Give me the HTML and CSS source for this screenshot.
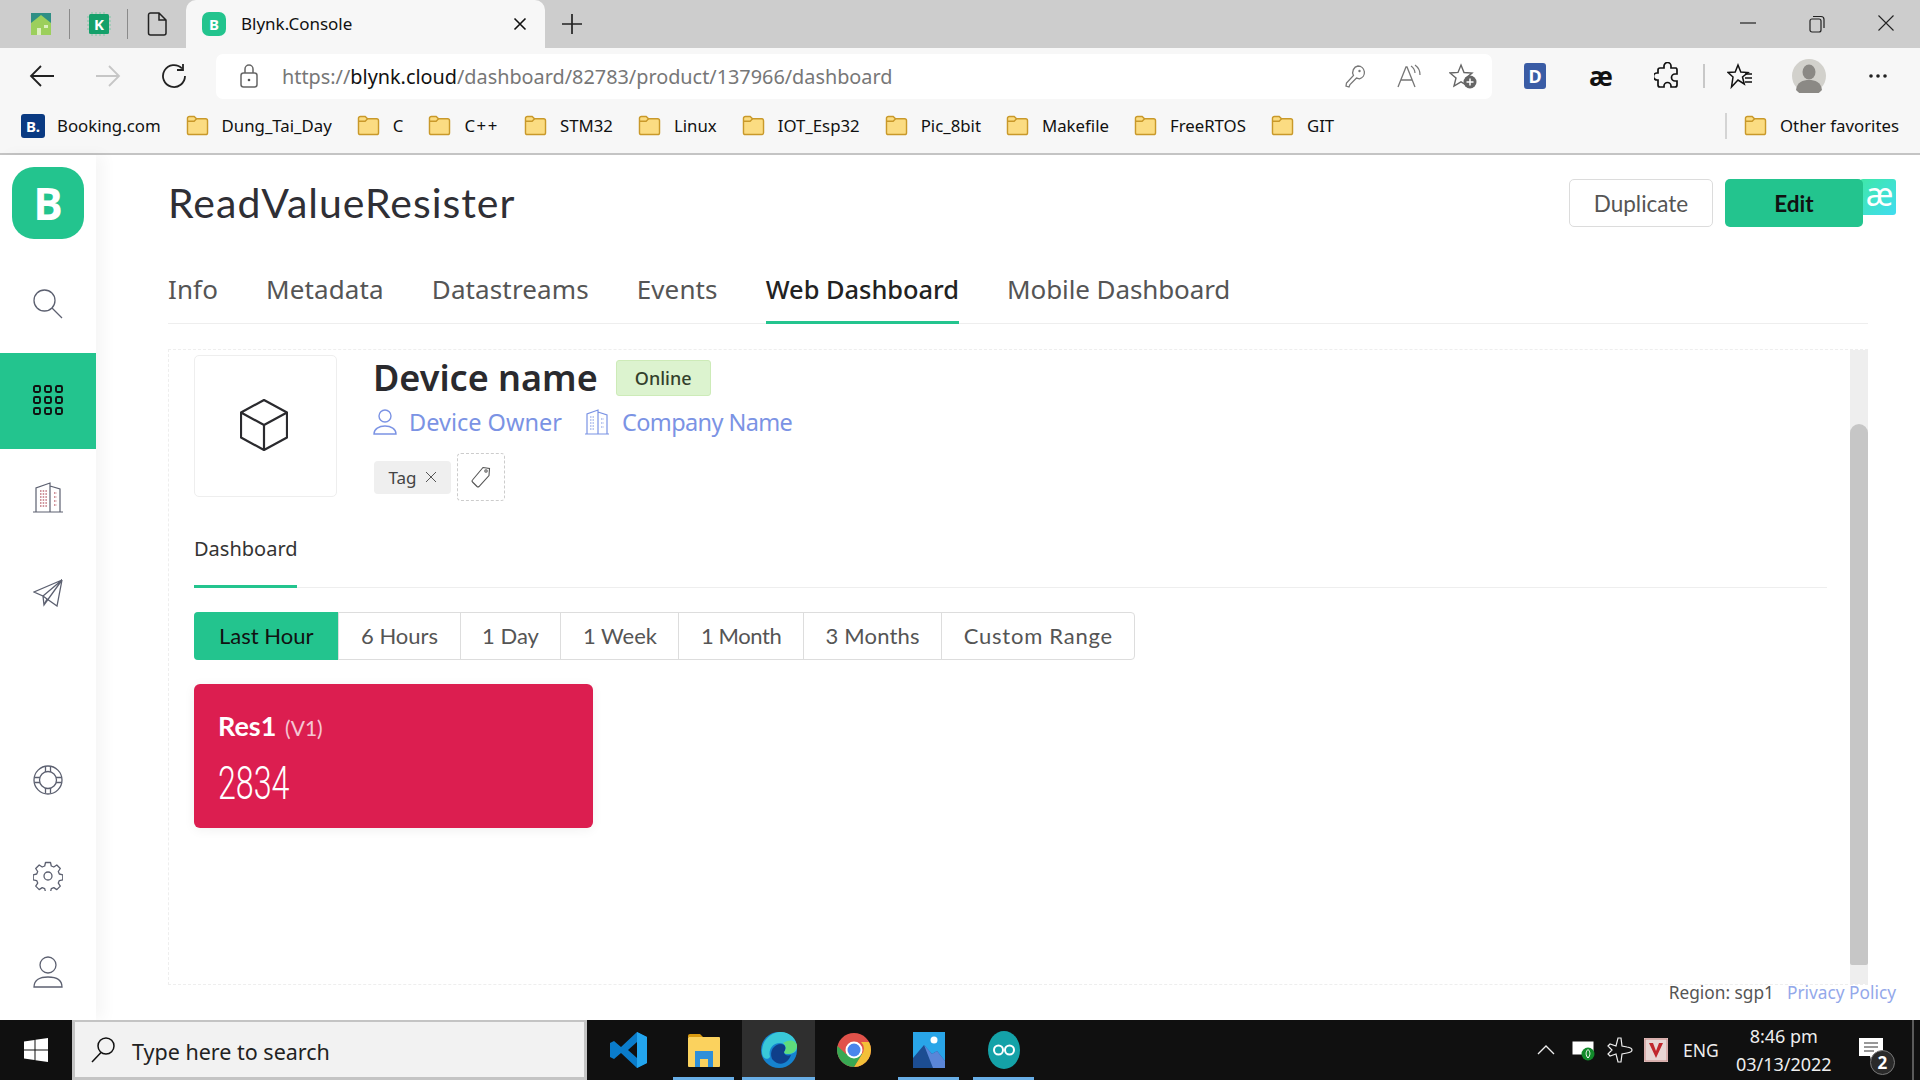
FILE: index.html
```html
<!DOCTYPE html>
<html lang="en">
<head>
  <meta charset="UTF-8">
  <meta name="viewport" content="width=device-width, initial-scale=1.0">
  <title>Blynk.Console</title>
  <link rel="stylesheet" href="styles.css">
</head>
<body>
  <svg class="defs" width="0" height="0">
    <symbol id="folder" viewBox="0 0 24 22">
      <path d="M1.5 5V3.5A2 2 0 0 1 3.5 1.500H8.500L11 4H20.500A2 2 0 0 1 22.500 6V18.500A2 2 0 0 1 20.500 20.500H3.500A2 2 0 0 1 1.500 18.500Z" fill="#fbdc82" stroke="#c9992a" stroke-width="1.500"/>
      <path d="M1.500 6.500H8.500L11 4" fill="none" stroke="#c9992a" stroke-width="1.500"/>
    </symbol>
  </svg>

  <!-- tab strip -->
  <div class="tabstrip">
    <div class="pinned">
      <svg width="24" height="24" viewBox="0 0 24 24"><path d="M2 1h20v10H2z" fill="#2f8f85"/><path d="M2 11l10-8 10 8v12H2z" fill="#9ccf5c"/><path d="M8 23v-7h4v7zM15 13h4v3h-4z" fill="#dcefc0"/></svg>
    </div>
    <div class="tab-sep"></div>
    <div class="pinned">
      <svg width="26" height="26" viewBox="0 0 26 26"><path d="M1 6h24M1 10h24M1 14h24M1 18h24M6 1v24M10 1v24M14 1v24M18 1v24" stroke="#7fc9a5" stroke-width="1"/><rect x="3" y="3" width="20" height="20" rx="1.500" fill="#14a06a"/><text x="13" y="18.500" class="k-glyph" text-anchor="middle">K</text></svg>
    </div>
    <div class="tab-sep"></div>
    <div class="pinned">
      <svg width="20" height="24" viewBox="0 0 20 24"><path d="M3.500 1h8.500l7 7v13a2 2 0 0 1-2 2H3.500a2 2 0 0 1-2-2V3a2 2 0 0 1 2-2zM12 1v7h7" fill="none" stroke="#222" stroke-width="1.500"/></svg>
    </div>
    <div class="tab-active">
      <div class="favicon">B</div>
      <span class="tab-title">Blynk.Console</span>
      <svg class="tab-close" width="14" height="14" viewBox="0 0 14 14"><path d="M1.500 1.500l11 11M12.500 1.500l-11 11" stroke="#111" stroke-width="1.600"/></svg>
    </div>
    <svg class="tab-new" width="22" height="22" viewBox="0 0 22 22"><path d="M11 1v20M1 11h20" stroke="#222" stroke-width="1.700"/></svg>
    <div class="win-controls">
      <div class="win-btn"><svg width="16" height="16" viewBox="0 0 16 16"><path d="M0 8h16" stroke="#222" stroke-width="1.200"/></svg></div>
      <div class="win-btn"><svg width="16" height="18" viewBox="0 0 16 18"><rect x="1" y="4" width="11" height="13" rx="2" fill="none" stroke="#222" stroke-width="1.200"/><path d="M4 1.500h8a3 3 0 0 1 3 3V13" fill="none" stroke="#222" stroke-width="1.200"/></svg></div>
      <div class="win-btn"><svg width="16" height="16" viewBox="0 0 16 16"><path d="M.5.500l15 15M15.500.500l-15 15" stroke="#222" stroke-width="1.100"/></svg></div>
    </div>
  </div>

  <!-- address bar -->
  <div class="toolbar">
    <div class="tool-btn"><svg width="26" height="24" viewBox="0 0 26 24"><path d="M25 12H2M12 2L2 12l10 10" fill="none" stroke="#222" stroke-width="1.800"/></svg></div>
    <div class="tool-btn"><svg width="26" height="24" viewBox="0 0 26 24"><path d="M1 12h23M14 2l10 10-10 10" fill="none" stroke="#c6c6c6" stroke-width="1.800"/></svg></div>
    <div class="tool-btn"><svg width="26" height="26" viewBox="0 0 26 26"><path d="M21 5.500A11 11 0 1 0 24 13M22 1v6h-6" fill="none" stroke="#222" stroke-width="1.800"/></svg></div>
    <div class="address">
      <svg class="lock" width="18" height="24" viewBox="0 0 18 24"><rect x="1" y="9" width="16" height="14" rx="2.500" fill="none" stroke="#666" stroke-width="1.500"/><path d="M5 9V5a4 4 0 0 1 8 0v4" fill="none" stroke="#666" stroke-width="1.500"/><circle cx="9" cy="16" r="1.300" fill="#555"/></svg>
      <div class="url">https://<b>blynk.cloud</b>/dashboard/82783/product/137966/dashboard</div>
      <div class="addr-btn"><svg width="22" height="24" viewBox="0 0 22 24"><path d="M14 2a6.500 6.500 0 0 1 1.500 12.800L12.500 14 6 20.500l-1 2.500-3-1 .500-3 7-7.500A6.500 6.500 0 0 1 14 2z" fill="none" stroke="#777" stroke-width="1.300"/><circle cx="15.500" cy="7" r="1.200" fill="#777"/></svg></div>
      <div class="addr-btn"><svg width="26" height="24" viewBox="0 0 26 24"><path d="M2 23L10 3h1l8 20M5 16h11" fill="none" stroke="#777" stroke-width="1.300"/><path d="M15 2a9 9 0 0 1 4 7M19 1a12 12 0 0 1 5 10" fill="none" stroke="#777" stroke-width="1.200"/></svg></div>
      <div class="addr-btn"><svg width="28" height="26" viewBox="0 0 28 26"><path d="M12 2l3 7.500 8 .600-6 5 2 8-7-4.300L5 23l2-8-6-5 8-.600z" fill="none" stroke="#666" stroke-width="1.400"/><circle cx="21" cy="19" r="6.500" fill="#666"/><path d="M21 15.500v7M17.500 19h7" stroke="#fff" stroke-width="1.500"/></svg></div>
    </div>
    <div class="tool-btn"><div class="ext-d">D</div></div>
    <div class="tool-btn"><span class="ext-ae">æ</span></div>
    <div class="tool-btn"><svg width="26" height="28" viewBox="0 0 26 28"><path d="M10 4a3.500 3.500 0 0 1 7 0v2h5a2 2 0 0 1 1 2v4h-2a3.500 3.500 0 0 0 0 7h2v4a2 2 0 0 1-2 2h-4v-1a3.500 3.500 0 0 0-7 0v1H6a2 2 0 0 1-2-2v-5H3a3.500 3.500 0 0 1 0-7h1V8a2 2 0 0 1 2-2h4z" fill="none" stroke="#111" stroke-width="1.700"/></svg></div>
    <div class="tool-sep"></div>
    <div class="tool-btn"><svg width="26" height="26" viewBox="0 0 26 26"><path d="M11 2l2.800 7 7.200.500-5.500 4.500 1.800 7-6.300-4-6.500 7 1.500-10L1 9.500 8.200 9z" fill="none" stroke="#111" stroke-width="1.500"/><path d="M18 11h7M18 15h7M18 19h7" stroke="#111" stroke-width="1.400"/></svg></div>
    <div class="tool-btn profile"><svg width="34" height="34" viewBox="0 0 34 34"><circle cx="17" cy="17" r="17" fill="#d2d1cc"/><ellipse cx="17" cy="13" rx="6.500" ry="7.500" fill="#8b8985"/><path d="M4 31c1-8 7-10 13-10s12 2 13 10a17 17 0 0 1-26 0z" fill="#8b8985"/></svg></div>
    <div class="tool-btn profile"><svg width="20" height="6" viewBox="0 0 20 6"><circle cx="3" cy="3" r="1.800" fill="#222"/><circle cx="10" cy="3" r="1.800" fill="#222"/><circle cx="17" cy="3" r="1.800" fill="#222"/></svg></div>
  </div>

  <!-- favorites bar -->
  <div class="bookmarks">
    <div class="bm booking-bm"><div class="booking-icon">B.</div><span>Booking.com</span></div>
    <div class="bm"><svg class="folder"><use href="#folder"/></svg><span>Dung_Tai_Day</span></div>
    <div class="bm"><svg class="folder"><use href="#folder"/></svg><span>C</span></div>
    <div class="bm cpp-bm"><svg class="folder"><use href="#folder"/></svg><span>C++</span></div>
    <div class="bm"><svg class="folder"><use href="#folder"/></svg><span>STM32</span></div>
    <div class="bm"><svg class="folder"><use href="#folder"/></svg><span>Linux</span></div>
    <div class="bm"><svg class="folder"><use href="#folder"/></svg><span>IOT_Esp32</span></div>
    <div class="bm"><svg class="folder"><use href="#folder"/></svg><span>Pic_8bit</span></div>
    <div class="bm"><svg class="folder"><use href="#folder"/></svg><span>Makefile</span></div>
    <div class="bm"><svg class="folder"><use href="#folder"/></svg><span>FreeRTOS</span></div>
    <div class="bm"><svg class="folder"><use href="#folder"/></svg><span>GIT</span></div>
    <div class="bm other-bm"><svg class="folder"><use href="#folder"/></svg><span>Other favorites</span></div>
  </div>

  <div class="app">
    <!-- left menu -->
    <div class="sidebar">
      <div class="logo">B</div>
      <div class="side-item search-item"><svg width="30" height="30" viewBox="0 0 30 30"><circle cx="11.500" cy="11.500" r="10.500" fill="none" stroke="#5c6070" stroke-width="1.300"/><path d="M19 19l10 10" stroke="#5c6070" stroke-width="1.300"/></svg></div>
      <div class="side-item active">
        <svg width="30" height="30" viewBox="0 0 30 30" fill="none" stroke="#111" stroke-width="1.900"><rect x="1" y="1" width="6" height="6" rx="1.500"/><rect x="12" y="1" width="6" height="6" rx="1.500"/><rect x="23" y="1" width="6" height="6" rx="1.500"/><rect x="1" y="12" width="6" height="6" rx="1.500"/><rect x="12" y="12" width="6" height="6" rx="1.500"/><rect x="23" y="12" width="6" height="6" rx="1.500"/><rect x="1" y="23" width="6" height="6" rx="1.500"/><rect x="12" y="23" width="6" height="6" rx="1.500"/><rect x="23" y="23" width="6" height="6" rx="1.500"/></svg>
      </div>
      <div class="side-item"><svg width="30" height="32" viewBox="0 0 30 32" fill="none" stroke="#5c6070" stroke-width="1.200"><path d="M0 31h30M3 31V7l14-5v29M17 5l10 3v23"/><path d="M7 10h7M7 13h7M7 16h7M7 19h7M7 22h7M7 25h7M21 12h3M21 16h3M21 20h3M21 24h3" stroke="#c0707a" stroke-dasharray="1.500 1.200" stroke-width="1.300"/></svg></div>
      <div class="side-item"><svg width="30" height="28" viewBox="0 0 30 28" fill="none" stroke="#5c6070" stroke-width="1.300"><path d="M29 1L1 13l9 4zM29 1L10 17l1 9zM29 1l-5 26-10-7-3 6M10 17l4 3"/></svg></div>
      <div class="side-item bottom-first"><svg width="30" height="30" viewBox="0 0 30 30" fill="none" stroke="#5c6070" stroke-width="1.300"><circle cx="15" cy="15" r="14"/><circle cx="15" cy="15" r="8.500"/><path d="M12.500 1.500v5.500M17.500 1.500v5.500M12.500 23v5.500M17.500 23v5.500M1.500 12.500H7M1.500 17.500H7M23 12.500h5.500M23 17.500h5.500"/></svg></div>
      <div class="side-item"><svg width="30" height="30" viewBox="0 0 30 30" fill="none" stroke="#5c6070" stroke-width="1.300"><circle cx="15" cy="15" r="4"/><path d="M12.500 1.500h5l.800 3.500 2.500 1 3-2 3.500 3.500-2 3 1 2.500 3.500.800v5l-3.500.800-1 2.500 2 3-3.500 3.500-3-2-2.500 1-.800 3.500h-5l-.800-3.500-2.500-1-3 2-3.500-3.500 2-3-1-2.500-3.500-.800v-5l3.500-.800 1-2.500-2-3 3.500-3.500 3 2 2.500-1z" stroke-linejoin="round"/></svg></div>
      <div class="side-item"><svg width="30" height="32" viewBox="0 0 30 32" fill="none" stroke="#5c6070" stroke-width="1.300"><circle cx="15" cy="9" r="8"/><path d="M1 31c0-7 6-10 14-10s14 3 14 10z"/></svg></div>
    </div>

    <div class="content">
      <div class="page-head">
        <h1 class="page-title">ReadValueResister</h1>
        <div class="head-actions">
          <button class="btn-outline">Duplicate</button>
          <button class="btn-green">Edit</button>
        </div>
        <div class="ae-overlay">æ</div>
      </div>

      <div class="page-tabs">
        <div class="page-tab">Info</div>
        <div class="page-tab">Metadata</div>
        <div class="page-tab">Datastreams</div>
        <div class="page-tab">Events</div>
        <div class="page-tab current">Web Dashboard</div>
        <div class="page-tab mobile-tab">Mobile Dashboard</div>
      </div>

      <div class="panel">
        <div class="panel-body">
          <div class="device-head">
            <div class="device-img">
              <svg width="48" height="52" viewBox="0 0 48 52" fill="none" stroke="#2a2a2e" stroke-width="2.200" stroke-linejoin="round"><path d="M24 1L47 13.500V38.500L24 51 1 38.500V13.500zM1 13.500L24 26 47 13.500M24 26V51"/></svg>
            </div>
            <div class="device-info">
              <div class="name-row">
                <div class="device-name">Device name</div>
                <div class="status">Online</div>
              </div>
              <div class="owner-row">
                <svg class="owner-icon" width="24" height="26" viewBox="0 0 24 26" fill="none" stroke="#7b93e4" stroke-width="1.400"><circle cx="12" cy="7" r="6"/><path d="M1 25c0-5 5-8 11-8s11 3 11 8z"/></svg>
                <span class="owner-link">Device Owner</span>
                <svg class="company-icon" width="24" height="26" viewBox="0 0 24 26" fill="none" stroke="#7b93e4" stroke-width="1.200"><path d="M0 25h24M2 25V5l11-4v24M13 3l9 3v19"/><path d="M5 8h5M5 11h5M5 14h5M5 17h5M5 20h5M16 10h3M16 14h3M16 18h3" stroke-dasharray="1.500 1"/></svg>
                <span class="owner-link company-link">Company Name</span>
              </div>
              <div class="tag-row">
                <div class="tag">Tag <svg width="12" height="12" viewBox="0 0 12 12"><path d="M1 1l10 10M11 1L1 11" stroke="#555" stroke-width="1"/></svg></div>
                <div class="tag-add"><svg width="20" height="22" viewBox="0 0 20 22" fill="none" stroke="#555" stroke-width="1.100"><path d="M12 1.500l6.500 1-.500 7L8 20.500a1.500 1.500 0 0 1-2 0l-4.500-4.500a1.500 1.500 0 0 1 0-2z"/><circle cx="15" cy="5" r="1.200"/></svg></div>
              </div>
            </div>
          </div>

          <div class="sub-tabs"><div class="sub-tab">Dashboard</div></div>

          <div class="ranges">
            <div class="range selected">Last Hour</div>
            <div class="range">6 Hours</div>
            <div class="range">1 Day</div>
            <div class="range">1 Week</div>
            <div class="range month-range">1 Month</div>
            <div class="range three-range">3 Months</div>
            <div class="range custom-range">Custom Range</div>
          </div>

          <div class="widget">
            <div class="widget-name">Res1 <span class="widget-pin">(V1)</span></div>
            <div class="widget-value">2834</div>
          </div>
        </div>
        <div class="scrollbar"><div class="scroll-thumb"></div></div>
      </div>

      <div class="page-foot">
        <span class="region">Region: sgp1</span>
        <span class="privacy">Privacy Policy</span>
      </div>
    </div>
  </div>

  <!-- windows taskbar -->
  <div class="taskbar">
    <div class="start"><svg width="24" height="24" viewBox="0 0 24 24" fill="#fff"><path d="M0 3.500l10.500-1.500v9.500H0zM11.500 1.800L24 0v11.500H11.500zM0 12.500h10.500V22L0 20.500zM11.500 12.500H24V24l-12.500-1.800z"/></svg></div>
    <div class="task-search">
      <svg width="24" height="26" viewBox="0 0 24 26" fill="none" stroke="#111" stroke-width="1.500"><circle cx="15" cy="9" r="8"/><path d="M10 15.500L1 25"/></svg>
      <span class="search-text">Type here to search</span>
    </div>
    <div class="task-app first-app">
      <svg width="38" height="36" viewBox="0 0 38 36"><path d="M27 0l10 5v26l-10 5L11 21 4 27l-4-2V11l4-2 7 6zM27 10l-9 8 9 8z" fill="#0a7ccb"/><path d="M27 0l10 5v26l-10 5z" fill="#23a5ee"/></svg>
    </div>
    <div class="task-app running">
      <svg width="34" height="36" viewBox="0 0 34 36"><path d="M1 4a2 2 0 0 1 2-2h10l3 3H1z" fill="#d99a10"/><rect x="1" y="5" width="32" height="30" rx="1" fill="#fbd25e"/><path d="M8 19h18v16h-5v-8h-8v8H8z" fill="#2f8fd8"/></svg>
    </div>
    <div class="task-app running current">
      <svg width="38" height="38" viewBox="0 0 38 38"><circle cx="19" cy="19" r="18" fill="#1683cf"/><path d="M2 21C2 8 12 1 21 1c9 0 16 7 16 15 0 6-5 7-9 7-3 0-4-1-4-2 3-3 2-9-4-9-7 0-12 6-10 14C7 30 2 27 2 21z" fill="#39c8d8"/><path d="M37 14c0 5-4 9-9 9-3 0-4-1-4-2 3-3 2-7-1-9 7-4 12-3 14 2z" fill="#5fdc7c"/><path d="M12 28c-3-8 2-15 9-15 4 0 6 4 3 8 0 3 3 4 7 3-3 8-11 13-19 4z" fill="#0f3f8a"/></svg>
    </div>
    <div class="task-app">
      <svg width="36" height="36" viewBox="0 0 36 36"><circle cx="18" cy="18" r="17" fill="#e0524a"/><path d="M33 10a17 17 0 0 1-15 25l8-13a9 9 0 0 0-1-12z" fill="#f3c038"/><path d="M1.500 14A17 17 0 0 0 18 35l8-13H10z" fill="#38a853"/><circle cx="18" cy="18" r="8.500" fill="#fff"/><circle cx="18" cy="18" r="6.500" fill="#4a85ec"/></svg>
    </div>
    <div class="task-app running">
      <svg width="32" height="36" viewBox="0 0 32 36"><rect width="32" height="36" fill="#29a5e8"/><circle cx="21" cy="8" r="3.500" fill="#fff"/><path d="M0 36V26l11-13 8 9 5-3 8 10v7z" fill="#1c4d92"/><path d="M11 13l8 9 5-3 8 10v7H20z" fill="#5a86d8"/></svg>
    </div>
    <div class="task-app running">
      <svg width="32" height="38" viewBox="0 0 32 38"><ellipse cx="16" cy="19" rx="16" ry="19" fill="#14a2a8"/><circle cx="10.500" cy="19" r="4.500" fill="none" stroke="#fff" stroke-width="2"/><circle cx="21.500" cy="19" r="4.500" fill="none" stroke="#fff" stroke-width="2"/></svg>
    </div>
    <div class="tray">
      <svg class="tray-caret" width="18" height="10" viewBox="0 0 18 10"><path d="M1 9l8-8 8 8" fill="none" stroke="#eee" stroke-width="1.300"/></svg>
      <svg class="tray-batt" width="24" height="22" viewBox="0 0 24 22"><rect x="1" y="3" width="20" height="12" fill="#fff" stroke="#fff"/><circle cx="16" cy="15" r="6.500" fill="#118a2a"/><path d="M16 10.500c2.500 2 2.500 6 0 8.500-2.500-2.500-2.500-6.500 0-8.500z" fill="none" stroke="#fff"/></svg>
      <svg class="tray-plane" width="26" height="26" viewBox="0 0 26 26"><path d="M1 9l2-2 6 2 2-8h3l1 8 5 1c3 .500 5 2 5 3s-2 2.500-5 3l-5 1-1 8h-3l-2-8-6 2-2-2 4-4z" fill="none" stroke="#eee" stroke-width="1.200"/></svg>
      <svg class="tray-v" width="24" height="24" viewBox="0 0 24 24"><rect width="24" height="24" fill="#e8d6d4"/><rect x="1" y="1" width="22" height="22" fill="none" stroke="#c98a88"/><path d="M5 5l7 15 7-15-4 0-3 8-3-8z" fill="#c0272d"/></svg>
      <span class="tray-lang">ENG</span>
      <div class="clock"><div>8:46 pm</div><div>03/13/2022</div></div>
      <div class="notify">
        <svg width="24" height="24" viewBox="0 0 24 24"><path d="M0 0h24v18h-8l-4 4-1-4H0z" fill="#fff"/><path d="M5 5h14M5 9h14M5 13h10" stroke="#333" stroke-width="1.100"/></svg>
        <div class="notify-count">2</div>
      </div>
      <div class="show-desktop"></div>
    </div>
  </div>
</body>
</html>
```

FILE: styles.css
```css
* {
  box-sizing: border-box;
}

html,
body {
  margin: 0;
  padding: 0;
}

body {
  width: 1920px;
  height: 1080px;
  overflow: hidden;
  display: flex;
  flex-direction: column;
  font-family: "Noto Sans", sans-serif;
  background-color: #ffffff;
  color: #333333;
}

.defs {
  display: none;
}

/* browser chrome */
.tabstrip {
  height: 48px;
  flex: none;
  display: flex;
  align-items: center;
  padding-left: 12px;
  background-color: #cdcdcd;
}

.pinned {
  width: 57px;
  display: flex;
  justify-content: center;
}

.k-glyph {
  font-family: "Open Sans", sans-serif;
  font-size: 15px;
  font-weight: 700;
  fill: #ffffff;
}

.tab-sep {
  width: 1px;
  height: 30px;
  background-color: #8a8a8a;
}

.tab-active {
  width: 359px;
  height: 48px;
  margin-left: 1px;
  display: flex;
  align-items: center;
  padding-left: 16px;
  background-color: #f7f7f7;
  border-radius: 10px 10px 0 0;
}

.favicon {
  width: 24px;
  height: 24px;
  border-radius: 7px;
  background-color: #23c48e;
  color: #ffffff;
  font-size: 15px;
  font-weight: 700;
  line-height: 24px;
  text-align: center;
}

.tab-title {
  margin-left: 15px;
  margin-top: -2px;
  font-size: 17px;
  color: #111111;
}

.tab-close {
  margin-left: auto;
  margin-right: 18px;
}

.tab-new {
  margin-left: 16px;
}

.win-controls {
  margin-left: auto;
  display: flex;
}

.win-btn {
  width: 69px;
  display: flex;
  justify-content: center;
}

.toolbar {
  height: 56px;
  flex: none;
  display: flex;
  align-items: center;
  padding-left: 9px;
  background-color: #f7f7f7;
}

.tool-btn {
  width: 66px;
  display: flex;
  justify-content: center;
  align-items: center;
}

.tool-sep {
  width: 2px;
  height: 24px;
  margin: 0 2px 0 3px;
  background-color: #c8c8c8;
}

.profile {
  margin-left: 3px;
}

.address {
  width: 1276px;
  height: 45px;
  margin: 0 10px 0 9px;
  display: flex;
  align-items: center;
  padding: 0 2px 0 24px;
  background-color: #ffffff;
  border-radius: 7px;
}

.url {
  margin-left: 24px;
  flex: 1;
  font-size: 19.840px;
  color: #777777;
}

.url b {
  font-weight: 400;
  color: #111111;
}

.addr-btn {
  width: 54px;
  display: flex;
  justify-content: center;
}

.ext-d {
  width: 22px;
  height: 26px;
  border-radius: 3px;
  background-color: #3a5ca5;
  color: #ffffff;
  font-size: 18px;
  font-weight: 700;
  line-height: 26px;
  text-align: center;
}

.ext-ae {
  font-size: 26px;
  font-weight: 700;
  line-height: 26px;
  color: #111111;
}

.bookmarks {
  height: 49px;
  flex: none;
  display: flex;
  align-items: center;
  padding-left: 21px;
  padding-bottom: 6px;
  background-color: #f7f7f7;
  font-size: 16.800px;
  color: #111111;
}

.bm {
  display: flex;
  align-items: center;
  margin-right: 25px;
}

.cpp-bm span {
  letter-spacing: 1.600px;
}

.folder {
  width: 23px;
  height: 21px;
  margin-right: 13px;
}

.booking-icon {
  width: 24px;
  height: 24px;
  margin-right: 12px;
  border-radius: 3px;
  background-color: #0a3a82;
  color: #ffffff;
  font-size: 15px;
  font-weight: 700;
  line-height: 24px;
  text-align: center;
}

.other-bm {
  margin-left: auto;
  margin-right: 21px;
  padding-left: 17px;
  border-left: 2px solid #d4d4d4;
  height: 26px;
}

/* blynk app */
.app {
  flex: 1;
  min-height: 0;
  display: flex;
  border-top: 2px solid #c4c4c4;
  background-color: #ffffff;
}

.sidebar {
  width: 96px;
  flex: none;
  display: flex;
  flex-direction: column;
  padding-top: 12px;
  background-color: #ffffff;
  box-shadow: 8px 0 14px rgba(0, 0, 0, 0.04);
}

.logo {
  width: 72px;
  height: 72px;
  margin: 0 12px 16px;
  border-radius: 22px;
  background-color: #23c48e;
  color: #ffffff;
  font-family: "Open Sans", sans-serif;
  font-size: 44px;
  font-weight: 700;
  line-height: 72px;
  text-align: center;
}

.side-item {
  height: 96px;
  flex: none;
  display: flex;
  justify-content: center;
  align-items: center;
}

.search-item {
  margin-bottom: 2px;
  padding-top: 2px;
}

.side-item.active {
  padding-bottom: 2px;
  background-color: #23c48e;
}

.bottom-first {
  margin-top: auto;
}

.content {
  flex: 1;
  min-width: 0;
  display: flex;
  flex-direction: column;
  padding: 24px 24px 0 72px;
}

.page-head {
  position: relative;
  height: 48px;
  flex: none;
  display: flex;
  align-items: center;
  justify-content: space-between;
}

.page-title {
  margin: -2px 0 0;
  font-family: "Lato", sans-serif;
  font-size: 41px;
  font-weight: 400;
  letter-spacing: 1px;
  color: #2f2f35;
}

.head-actions {
  position: relative;
  z-index: 1;
  display: flex;
  gap: 12px;
  margin-right: 33px;
}

.head-actions button {
  height: 48px;
  font-family: "Lato", sans-serif;
  font-size: 22.500px;
  border-radius: 5px;
}

.btn-outline {
  width: 144px;
  background-color: #ffffff;
  border: 1px solid #dcdcdc;
  color: #555555;
}

.btn-green {
  width: 138px;
  background-color: #23c48e;
  border: none;
  color: #111111;
  font-weight: 700;
}

.ae-overlay {
  position: absolute;
  right: 0;
  top: 0;
  width: 36px;
  height: 36px;
  padding-left: 3px;
  border-radius: 3px;
  background: linear-gradient(135deg, #3fe8a8, #40dcf0);
  color: #ffffff;
  font-size: 32px;
  line-height: 30px;
  text-align: center;
}

.page-tabs {
  height: 69px;
  flex: none;
  margin: 28px 28px 0 0;
  display: flex;
  gap: 48px;
  border-bottom: 1px solid #eeeeee;
}

.page-tab {
  height: 69px;
  padding-top: 15px;
  font-size: 26px;
  line-height: 38px;
  letter-spacing: 0.12px;
  color: #555555;
}

.page-tab.current {
  color: #222222;
  font-size: 25.400px;
  font-weight: 500;
  letter-spacing: 0;
  border-bottom: 3px solid #23c48e;
}

.mobile-tab {
  letter-spacing: -0.1px;
}

.panel {
  flex: 1;
  min-height: 0;
  margin: 25px 28px 0 0;
  display: flex;
  border-top: 1px dashed #eeeeee;
  border-left: 1px dashed #eeeeee;
  border-bottom: 1px dashed #eeeeee;
}

.panel-body {
  flex: 1;
  min-width: 0;
  padding: 5px 23px 0 25px;
}

.scrollbar {
  width: 18px;
  flex: none;
  padding-top: 74px;
  padding-bottom: 19px;
  background-color: #eeeeee;
}

.scroll-thumb {
  height: 100%;
  background-color: #c6c6c6;
  border-radius: 9px 9px 2px 2px;
}

.device-head {
  height: 146px;
  display: flex;
  gap: 36px;
}

.device-img {
  width: 143px;
  height: 142px;
  display: flex;
  align-items: center;
  justify-content: center;
  border: 1px solid #eeeeee;
  border-radius: 5px;
  padding-right: 4px;
  padding-bottom: 2px;
}

.device-info {
  padding-top: 5px;
}

.name-row {
  height: 36px;
  display: flex;
  align-items: center;
}

.device-name {
  font-size: 36px;
  font-weight: 600;
  line-height: 36px;
  color: #2a2a2e;
}

.status {
  width: 95px;
  height: 36px;
  margin-left: 18px;
  background-color: #dcf3cf;
  border: 1px solid #cdebb8;
  border-radius: 3px;
  font-size: 18px;
  font-weight: 500;
  line-height: 34px;
  text-align: center;
  color: #33402c;
}

.owner-row {
  height: 28px;
  margin-top: 12px;
  display: flex;
  align-items: center;
  font-size: 23.500px;
}

.owner-link {
  color: #7b93e4;
  margin-left: 12px;
}

.company-link {
  margin-left: 13px;
  letter-spacing: -0.6px;
}

.company-icon {
  margin-left: 23px;
}

.tag-row {
  margin: 17px 0 0 1px;
  display: flex;
  align-items: center;
  gap: 6px;
}

.tag {
  width: 77px;
  height: 33px;
  display: flex;
  align-items: center;
  justify-content: center;
  gap: 8px;
  background-color: #efefef;
  border-radius: 4px;
  font-size: 17px;
  color: #444444;
}

.tag-add {
  width: 48px;
  height: 48px;
  display: flex;
  align-items: center;
  justify-content: center;
  border: 1px dashed #cccccc;
  border-radius: 4px;
}

.sub-tabs {
  height: 87px;
  box-shadow: inset 0 -1px 0 #eeeeee;
}

.sub-tab {
  width: 103px;
  height: 87px;
  padding-top: 31px;
  font-size: 20px;
  line-height: 34px;
  color: #333333;
  border-bottom: 3px solid #23c48e;
}

.ranges {
  width: max-content;
  margin-top: 24px;
  display: flex;
  height: 48px;
  border: 1px solid #dddddd;
  border-radius: 4px;
  font-family: "Lato", sans-serif;
  font-size: 22px;
  line-height: 46px;
  color: #555555;
}

.range {
  padding: 0 21.500px;
  border-left: 1px solid #dddddd;
}

.range:first-child {
  border-left: 0;
}

.range.selected {
  margin: -1px 0 -1px -1px;
  padding: 0 25px;
  line-height: 48px;
  background-color: #23c48e;
  border-radius: 4px 0 0 4px;
  color: #111111;
}

.month-range {
  letter-spacing: -0.4px;
}

.three-range {
  letter-spacing: 0.2px;
}

.custom-range {
  letter-spacing: 0.75px;
}

.widget {
  width: 399px;
  height: 144px;
  margin-top: 24px;
  padding: 24px 23px 0 24px;
  background-color: #dc1e50;
  border-radius: 6px;
  box-shadow: 0 2px 12px rgba(0, 0, 0, 0.06);
  color: #ffffff;
}

.widget-name {
  font-family: "Lato", sans-serif;
  font-size: 27px;
  font-weight: 700;
  line-height: 36px;
}

.widget-pin {
  margin-left: 2px;
  font-size: 21px;
  font-weight: 400;
  opacity: 0.75;
}

.widget-value {
  margin-top: 11px;
  font-family: "Roboto", sans-serif;
  font-size: 46px;
  font-weight: 300;
  line-height: 52px;
  transform: scaleX(0.7);
  transform-origin: left center;
}

.page-foot {
  height: 35px;
  flex: none;
  display: flex;
  justify-content: flex-end;
  gap: 13px;
  font-size: 17.300px;
  line-height: 16px;
}

.region {
  color: #555555;
}

.privacy {
  color: #93a8ea;
}

/* taskbar */
.taskbar {
  height: 60px;
  flex: none;
  display: flex;
  align-items: center;
  background-color: #101010;
}

.start {
  width: 72px;
  display: flex;
  justify-content: center;
}

.task-search {
  width: 515px;
  height: 60px;
  display: flex;
  align-items: center;
  gap: 17px;
  padding-left: 16px;
  background-color: #f2f2f2;
  border: 3px solid #c4c4c4;
  border-top-width: 2px;
  font-size: 21.500px;
  color: #222222;
}

.search-text {
  padding-top: 3px;
}

.task-app {
  width: 75px;
  height: 60px;
  display: flex;
  align-items: center;
  justify-content: center;
}

.first-app {
  margin-left: 4px;
}

.task-app.running {
  background: linear-gradient(#68aee6, #68aee6) center bottom / 61px 3px no-repeat;
}

.task-app.current {
  background: linear-gradient(#68aee6, #68aee6) center bottom / 73px 3px no-repeat, linear-gradient(#2f2f2f, #2f2f2f) center / 73px 60px no-repeat;
}

.tray {
  flex: 1;
  height: 60px;
  display: flex;
  align-items: center;
  color: #eeeeee;
}

.tray-caret {
  margin-left: 496px;
}

.tray-batt {
  margin-left: 17px;
}

.tray-plane {
  margin-left: 11px;
}

.tray-v {
  margin-left: 11px;
}

.tray-lang {
  margin-left: 15px;
  font-size: 17.500px;
}

.clock {
  width: 110px;
  margin-left: 10px;
  font-size: 18px;
  line-height: 28px;
  text-align: center;
}

.notify {
  position: relative;
  margin-left: 20px;
  width: 24px;
  height: 24px;
}

.notify-count {
  position: absolute;
  left: 11px;
  top: 12px;
  width: 25px;
  height: 25px;
  border-radius: 50%;
  background-color: #2a2a2a;
  border: 1px solid #777777;
  color: #ffffff;
  font-size: 17px;
  font-weight: 700;
  line-height: 23px;
  text-align: center;
}

.show-desktop {
  width: 2px;
  height: 60px;
  margin-left: auto;
  margin-right: 6px;
  background-color: #5a5a5a;
}
```
